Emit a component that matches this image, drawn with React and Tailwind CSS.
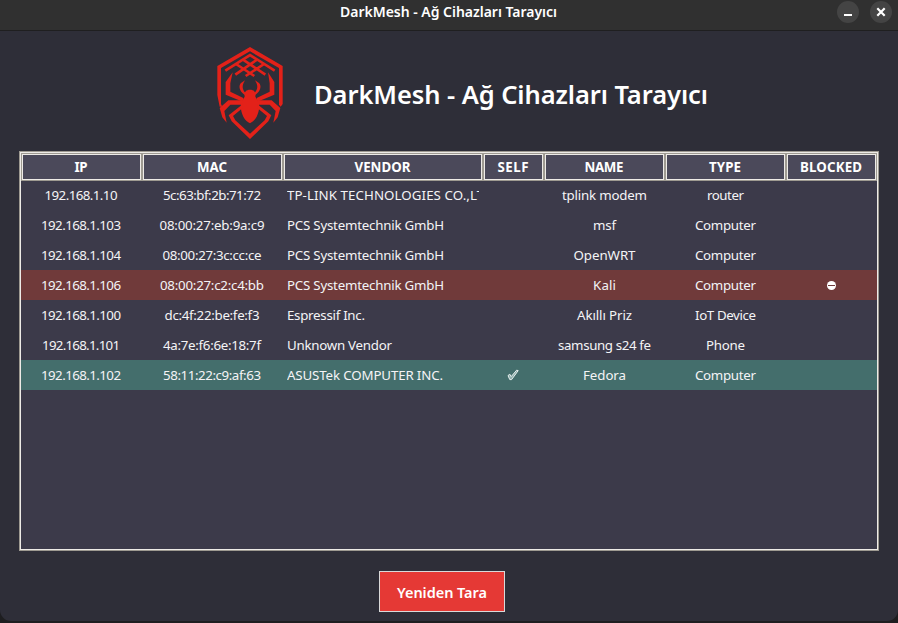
import { useLayoutEffect, useRef, useState } from "react";

const COLUMNS = [
  { label: "IP", w: 13 },
  { label: "MAC", w: 30 },
  { label: "VENDOR", w: 56 },
  { label: "SELF", w: 31 },
  { label: "NAME", w: 39 },
  { label: "TYPE", w: 32 },
  { label: "BLOCKED", w: 62 },
];

const GRID = "grid grid-cols-[121px_141px_200px_61px_121px_121px_91px]";

const DEVICES = [
  { ip: ["192.168.1.10", 73], mac: ["5c:63:bf:2b:71:72", 98], vendor: ["TP-LINK TECHNOLOGIES CO.,LTD.", 210], name: ["tplink modem", 85], type: ["router", 37] },
  { ip: ["192.168.1.103", 80], mac: ["08:00:27:eb:9a:c9", 105], vendor: ["PCS Systemtechnik GmbH", 157], name: ["msf", 23], type: ["Computer", 61] },
  { ip: ["192.168.1.104", 80], mac: ["08:00:27:3c:cc:ce", 99], vendor: ["PCS Systemtechnik GmbH", 157], name: ["OpenWRT", 62], type: ["Computer", 61] },
  { ip: ["192.168.1.106", 80], mac: ["08:00:27:c2:c4:bb", 104], vendor: ["PCS Systemtechnik GmbH", 157], name: ["Kali", 23], type: ["Computer", 61], blocked: true },
  { ip: ["192.168.1.100", 80], mac: ["dc:4f:22:be:fe:f3", 95], vendor: ["Espressif Inc.", 78], name: ["Akıllı Priz", 55], type: ["IoT Device", 61] },
  { ip: ["192.168.1.101", 78], mac: ["4a:7e:f6:6e:18:7f", 98], vendor: ["Unknown Vendor", 105], name: ["samsung s24 fe", 93], type: ["Phone", 39] },
  { ip: ["192.168.1.102", 80], mac: ["58:11:22:c9:af:63", 98], vendor: ["ASUSTek COMPUTER INC.", 156], name: ["Fedora", 43], type: ["Computer", 61], self: true },
];

// Sets a label to a given width by spreading the difference between its letters.
function Label({ children, w, className = "" }) {
  const ref = useRef(null);
  const [spacing, setSpacing] = useState(0);
  useLayoutEffect(() => {
    const natural = ref.current.getBoundingClientRect().width;
    setSpacing((w - natural) / (children.length - 1));
  }, []);
  return (
    <span
      ref={ref}
      className={`inline-block shrink-0 whitespace-pre ${className}`}
      style={{ letterSpacing: spacing, marginRight: -spacing }}
    >
      {children}
    </span>
  );
}

function SpiderLogo() {
  return (
    <svg viewBox="36 21 196 276" className="h-[92px] w-[66px] shrink-0" fill="#e32119">
      <path d="M134 21 232 78V192L226 200 221 194V84L134 34 47 84V192L51 200H43L36 165V78Z" />
      <g fill="none" stroke="#e32119" strokeWidth="8">
        <path d="M60 92 134 45 208 92" />
        <path d="M92 72 147 108M112 58 180 104M176 72 121 108M156 58 90 104" />
      </g>
      <path d="M134 149C148 149 152 158 150 170L158 183C165 196 161 216 154 230C148 241 141 246 134 250C127 246 120 241 114 230C107 216 103 196 110 183L118 170C116 158 120 149 134 149Z" />
      <path d="M118 165C101 152 99 137 107 129L119 121C109 137 110 149 121 159Z" />
      <path d="M150 165C167 152 169 137 161 129L149 121C159 137 158 149 147 159Z" />
      <path d="M112 185 61 164V126L82 97 75 130V155L114 174Z" />
      <path d="M156 185 207 164V126L188 97 193 130V155L154 174Z" />
      <path d="M110 181H69L43 204 51 232 64 248 57 213 75 194H110Z" />
      <path d="M158 181H199L225 204 217 232 204 248 211 213 193 194H158Z" />
      <path d="M112 193 70 226 79 244 134 297 189 244 198 226 156 193V204L185 228 178 241 134 281 90 241 83 228 112 204Z" />
    </svg>
  );
}

function TitleBar() {
  return (
    <header className="grid h-[31px] shrink-0 grid-cols-[1fr_auto_1fr] items-start border-b border-[#1f1f20] bg-[#303030]">
      <span />
      <h1 className="h-6 pr-px text-[14px] leading-6 font-semibold">
        <Label w={217}>DarkMesh - Ağ Cihazları Tarayıcı</Label>
      </h1>
      <div className="flex justify-end gap-[11px] pt-px pr-[6px]">
        <button className="flex size-[22px] items-center justify-center rounded-full bg-[#444444]">
          <svg viewBox="0 0 22 22" className="size-[22px]"><path d="M7 13h8v2H7z" fill="#fff" /></svg>
        </button>
        <button className="flex size-[22px] items-center justify-center rounded-full bg-[#444444]">
          <svg viewBox="0 0 22 22" className="size-[22px]" fill="none" stroke="#fff" strokeWidth="2.2"><path d="m7.3 7.3 7.4 7.4m0-7.4-7.4 7.4" /></svg>
        </button>
      </div>
    </header>
  );
}

function DeviceRow({ device }) {
  const tone = device.blocked ? "bg-[#703a3a]" : device.self ? "bg-[#446e6c]" : "";
  return (
    <div className={`${GRID} h-[30px] items-center text-[13.3px] leading-[30px] text-[#f4f4f6] ${tone}`}>
      <div className="flex justify-center pr-px"><Label w={device.ip[1]}>{device.ip[0]}</Label></div>
      <div className="flex justify-center pr-px"><Label w={device.mac[1]}>{device.mac[0]}</Label></div>
      <div className="mr-1 ml-1 flex overflow-hidden"><Label w={device.vendor[1]}>{device.vendor[0]}</Label></div>
      <div className="flex justify-center pr-0.5">
        {device.self && (
          <svg viewBox="0 0 12 12" className="size-3" fill="#8fb0ae" stroke="#e8efee" strokeWidth="1">
            <path d="M1 6.6 2.8 5.2 4.2 7.6 9.6 1.2 11.2 1.6 4.6 10.6 2.8 10.6Z" />
          </svg>
        )}
      </div>
      <div className="flex justify-center"><Label w={device.name[1]}>{device.name[0]}</Label></div>
      <div className="flex justify-center"><Label w={device.type[1]}>{device.type[0]}</Label></div>
      <div className="flex justify-center">
        {device.blocked && (
          <svg viewBox="0 0 9 9" className="size-[9px]">
            <circle cx="4.5" cy="4.5" r="4.5" fill="#fff" />
            <path d="M1 4h7v1H1z" fill="#703a3a" />
          </svg>
        )}
      </div>
    </div>
  );
}

export default function App() {
  return (
    <div className="h-[623px] w-[898px] overflow-hidden bg-[#1e1e20] font-['Noto_Sans',sans-serif] text-white">
      <div className="flex h-[621px] flex-col overflow-hidden rounded-b-[11px] bg-[#2e2e38]">
        <TitleBar />
        <div className="flex h-[120px] shrink-0 items-start pt-4 pl-[217px]">
          <SpiderLogo />
          <h2 className="ml-[31px] pt-[29px] text-[25.5px] leading-9 font-semibold">
            <Label w={394}>DarkMesh - Ağ Cihazları Tarayıcı</Label>
          </h2>
        </div>
        <main className="mx-[19px] h-[400px] w-[860px] shrink-0 border border-[#9e9a91]">
          <div className="h-full border border-[#eeebe7] bg-[#3c3a4a]">
            <div className={`${GRID} h-[27px]`}>
              {COLUMNS.map((c) => (
                <div key={c.label} className="border border-[#9e9a91]">
                  <div className="flex h-full items-center justify-center border border-[#eeebe7] bg-[#4b495a] pr-px text-[13.3px] leading-6 font-bold">
                    <Label w={c.w}>{c.label}</Label>
                  </div>
                </div>
              ))}
            </div>
            {DEVICES.map((d) => <DeviceRow key={d.ip[0]} device={d} />)}
          </div>
        </main>
        <div className="flex justify-center pt-5 pr-[14px]">
          <button className="flex h-[41px] w-[126px] items-center justify-center border border-[#d9d9d9] bg-[#e53935] pt-0.5 text-[14.5px] font-semibold">
            <Label w={90}>Yeniden Tara</Label>
          </button>
        </div>
      </div>
    </div>
  );
}
